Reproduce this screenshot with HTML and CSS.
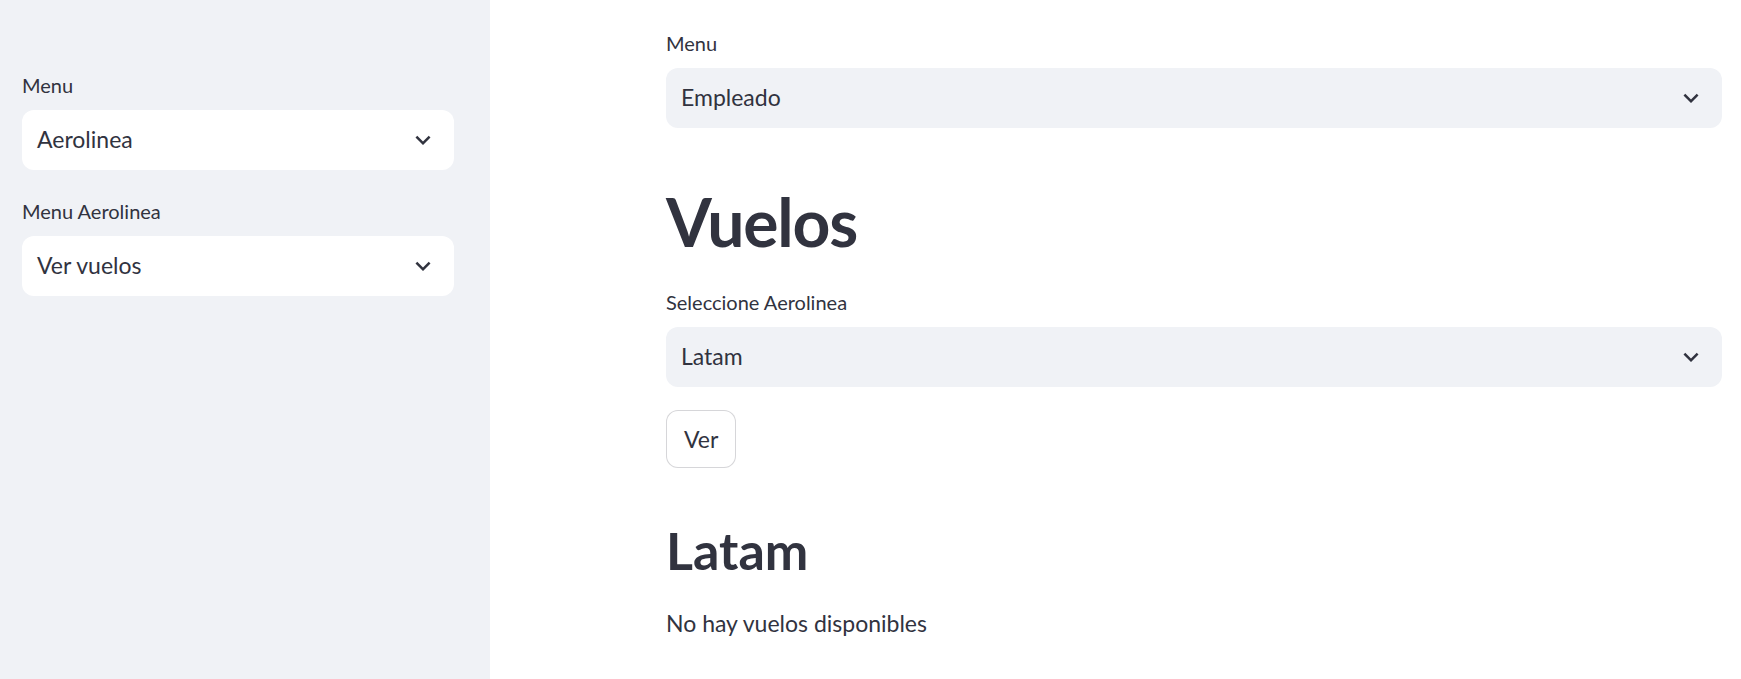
FILE: index.html
```html
<!DOCTYPE html>
<html lang="es">
<head>
<meta charset="utf-8">
<title>Vuelos</title>
<link rel="stylesheet" href="styles.css">
</head>
<body>
<aside class="sidebar">
  <div class="field">
    <div class="label">Menu</div>
    <div class="select select-white">
      <span class="value">Aerolinea</span>
      <svg class="chev" viewBox="0 0 24 24"><path d="M7.41 8.59L12 13.17l4.59-4.58L18 10l-6 6-6-6 1.41-1.41z"/></svg>
    </div>
  </div>
  <div class="field">
    <div class="label">Menu Aerolinea</div>
    <div class="select select-white">
      <span class="value">Ver vuelos</span>
      <svg class="chev" viewBox="0 0 24 24"><path d="M7.41 8.59L12 13.17l4.59-4.58L18 10l-6 6-6-6 1.41-1.41z"/></svg>
    </div>
  </div>
</aside>
<main class="main">
  <div class="field">
    <div class="label">Menu</div>
    <div class="select">
      <span class="value">Empleado</span>
      <svg class="chev" viewBox="0 0 24 24"><path d="M7.41 8.59L12 13.17l4.59-4.58L18 10l-6 6-6-6 1.41-1.41z"/></svg>
    </div>
  </div>
  <h1 class="h1">Vuelos</h1>
  <div class="field">
    <div class="label">Seleccione Aerolinea</div>
    <div class="select">
      <span class="value">Latam</span>
      <svg class="chev" viewBox="0 0 24 24"><path d="M7.41 8.59L12 13.17l4.59-4.58L18 10l-6 6-6-6 1.41-1.41z"/></svg>
    </div>
  </div>
  <div class="btn-row"><button class="btn">Ver</button></div>
  <h2 class="h2">Latam</h2>
  <p class="text">No hay vuelos disponibles</p>
</main>
</body>
</html>
```
FILE: styles.css
```css
* { box-sizing: border-box; }
html, body { margin: 0; padding: 0; }
body {
  display: flex;
  min-height: 100vh;
  font-family: "Lato", "Noto Sans", sans-serif;
  color: #31333f;
  background: #ffffff;
}
.sidebar {
  width: 490px;
  flex-shrink: 0;
  background: #f0f2f6;
  padding: 70px 36px 0 22px;
  display: flex;
  flex-direction: column;
  gap: 26px;
}
.main {
  flex: 1;
  padding: 28px 19px 0 176px;
  display: flex;
  flex-direction: column;
}
.field { display: flex; flex-direction: column; }
.label {
  font-size: 20px;
  line-height: 30px;
  height: 32px;
  margin-bottom: 8px;
  color: #31333f;
}
.select {
  height: 60px;
  border-radius: 12px;
  background: #f0f2f6;
  display: flex;
  align-items: center;
  justify-content: space-between;
  padding: 0 16px 0 15px;
}
.select-white { background: #ffffff; }
.value { font-size: 23px; line-height: 30px; margin-bottom: 2px; color: #31333f; }
.chev { width: 30px; height: 30px; fill: #31333f; }
.h1 {
  margin: 24px 0 26px;
  padding: 30px 0 0;
  font-size: 66px;
  line-height: 79px;
  font-weight: 700;
  color: #31333f;
  letter-spacing: -1.2px;
}
.btn-row { margin-top: 23px; }
.btn {
  height: 58px;
  padding: 0 17px;
  border: 1px solid rgba(49, 51, 63, 0.2);
  border-radius: 12px;
  background: #ffffff;
  font-family: inherit;
  font-size: 23px;
  color: #31333f;
}
.h2 {
  margin: 50px 0 0;
  font-size: 52px;
  line-height: 65px;
  font-weight: 700;
  color: #31333f;
}
.text {
  margin: 21px 0 0;
  font-size: 23px;
  line-height: 38px;
  color: #31333f;
}
```
